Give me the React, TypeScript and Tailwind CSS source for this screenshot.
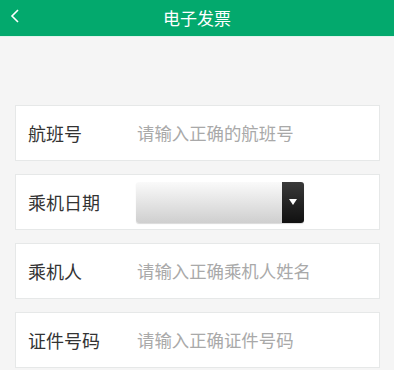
const font = { fontFamily: '"Noto Sans CJK SC", "Noto Sans", sans-serif' };

function Row({ label, placeholder }: { label: string; placeholder: string }) {
  return (
    <div className="flex h-[56px] items-center border border-[#e6e8e8] bg-white">
      <span className="w-[121px] shrink-0 pl-[12px] text-[18px] text-[#333]">{label}</span>
      <input
        className="min-w-0 flex-1 bg-transparent text-[17.4px] text-[#333] outline-none placeholder:text-[#a9a9a9]"
        placeholder={placeholder}
        style={font}
      />
    </div>
  );
}

export default function App() {
  return (
    <div className="h-[370px] w-[394px] overflow-hidden bg-[#f5f5f5]" style={font}>
      <header className="relative flex h-[37px] items-center justify-center border-b border-[#e0f5ec] bg-[#03a96d]">
        <button className="absolute left-[8px] top-[8px] text-white">
          <svg width="14" height="16" viewBox="0 0 14 16" fill="none">
            <path d="M10 2 L4 8 L10 14" stroke="white" strokeWidth="1.6" />
          </svg>
        </button>
        <h1 className="text-[17px] text-white">电子发票</h1>
      </header>

      <div className="flex flex-col gap-[13px] pl-[15px] pr-[14px] pt-[68px]">
        <Row label="航班号" placeholder="请输入正确的航班号" />
        <div className="flex h-[56px] items-center border border-[#e6e8e8] bg-white">
          <span className="w-[120px] shrink-0 pl-[12px] text-[18px] text-[#333]">乘机日期</span>
          <div className="flex h-[41px] w-[168px] overflow-hidden rounded-[3px] shadow-[0_1px_1px_rgba(0,0,0,0.15)]">
            <div className="flex-1 bg-gradient-to-b from-[#fafafa] to-[#cfcfcf]" />
            <div className="flex w-[22px] items-center justify-center bg-gradient-to-b from-[#3a3a3a] to-[#111]">
              <svg width="8" height="6" viewBox="0 0 8 6">
                <path d="M0 0 H8 L4 6 Z" fill="white" />
              </svg>
            </div>
          </div>
        </div>
        <Row label="乘机人" placeholder="请输入正确乘机人姓名" />
        <Row label="证件号码" placeholder="请输入正确证件号码" />
      </div>
    </div>
  );
}
